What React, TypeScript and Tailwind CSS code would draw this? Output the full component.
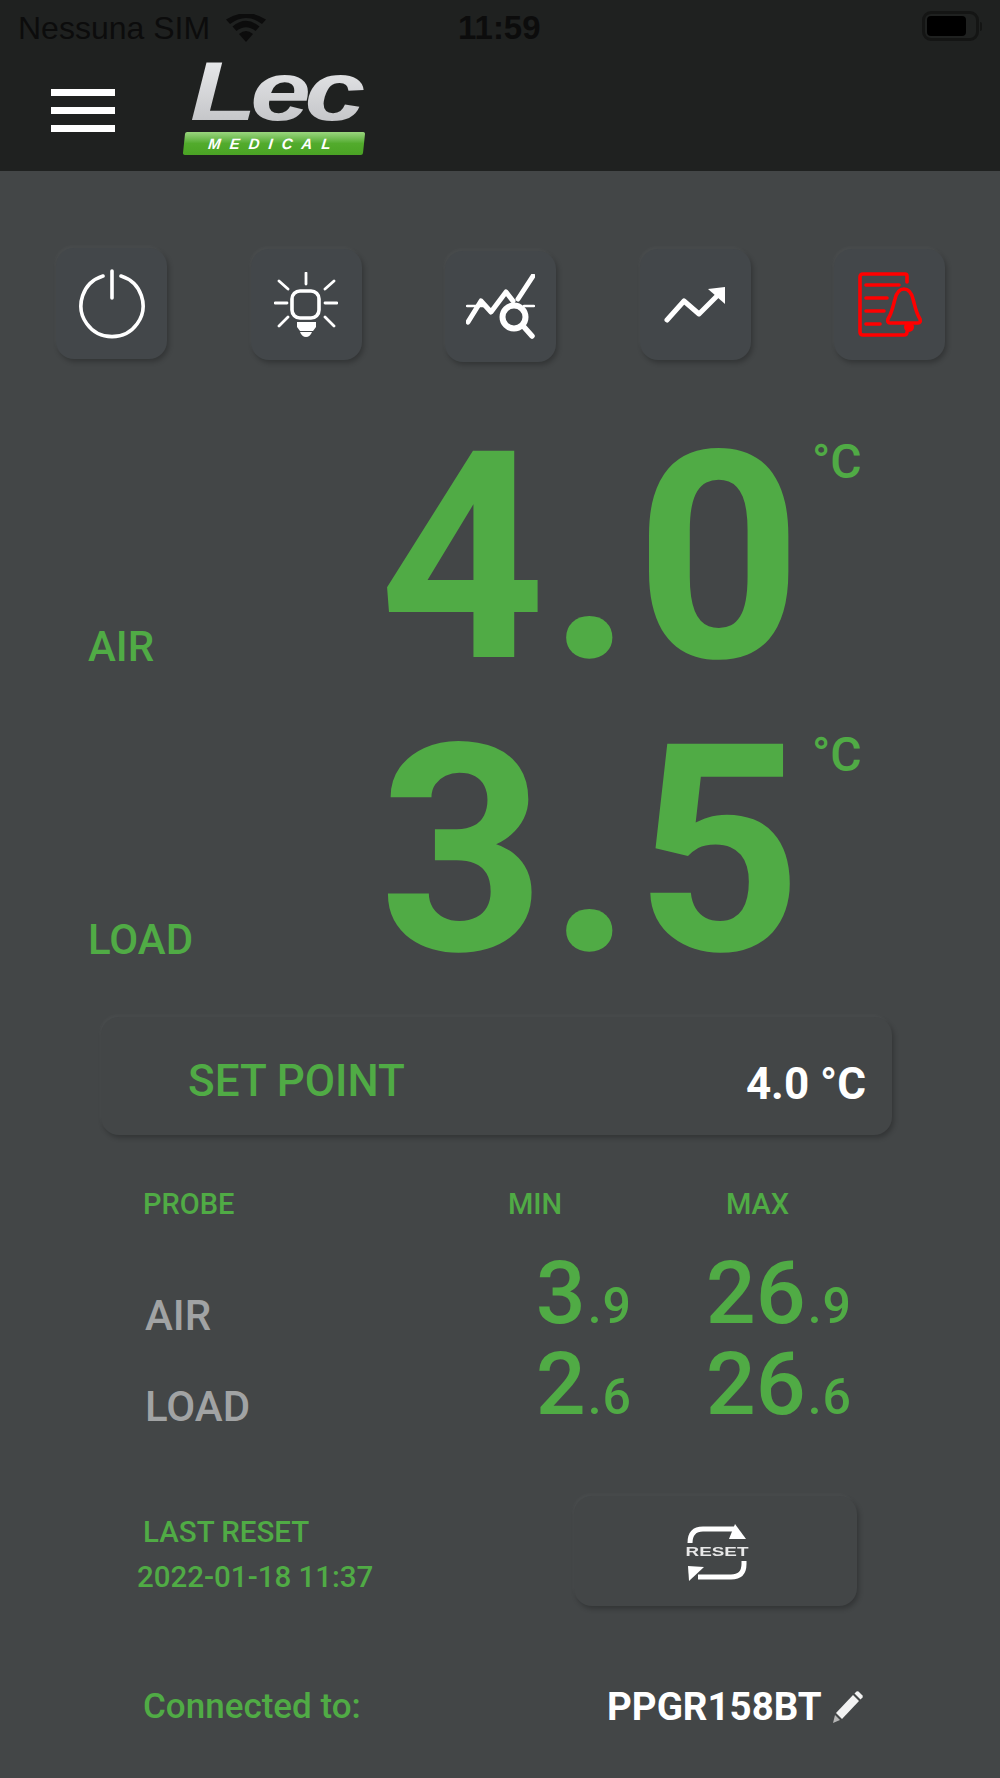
const GREEN = "text-[#50ab45]";
const cardShadow =
    "shadow-[2px_3px_5px_rgba(0,0,0,0.24),-1px_-2px_3px_rgba(255,255,255,0.04)]";

function PowerIcon() {
    return (
        <svg width="70" height="72" viewBox="0 0 70 72" fill="none" stroke="white" strokeWidth="3.6" strokeLinecap="round">
            <path d="M26 8 A31 31 0 1 0 44 8" />
            <path d="M35 3 V30" />
        </svg>
    );
}

function BulbIcon() {
    return (
        <svg width="64" height="66" viewBox="0 0 64 66" fill="none" stroke="white" strokeWidth="2.8" strokeLinecap="round">
            <rect x="18" y="19" width="27" height="27" rx="8" strokeWidth="3.6" />
            <path d="M32 1 V12 M1 31 H13 M51 31 H63 M5 9 L14 17 M60 9 L51 17 M5 54 L14 45 M60 54 L51 45" />
            <path d="M23 50 H42 V55 L39 59 H26 L23 55 Z" fill="white" stroke="none" />
            <path d="M26 60 H38 Q36 65 32 65 Q28 65 26 60 Z" fill="white" stroke="none" />
        </svg>
    );
}

function SearchChartIcon() {
    return (
        <svg width="69" height="66" viewBox="0 0 69 66" fill="none" stroke="white" strokeLinecap="round" strokeLinejoin="round">
            <path d="M2 48 L15 27 L25 38 L40 18 L47 27" strokeWidth="5" />
            <path d="M52 25 L67 2" strokeWidth="5" />
            <path d="M1 32 H18 M58 32 H68" strokeWidth="2.4" />
            <circle cx="48" cy="43" r="11.5" strokeWidth="6" />
            <path d="M58 53 L66 62" strokeWidth="5.5" />
        </svg>
    );
}

function TrendIcon() {
    return (
        <svg width="62" height="38" viewBox="0 0 62 38" fill="none">
            <path d="M3 34 L20 15 L35 28 L53 10" stroke="white" strokeWidth="5" strokeLinecap="round" strokeLinejoin="round" />
            <path d="M44 3 L61 1 V18 Z" fill="white" />
        </svg>
    );
}

function AlarmLogIcon() {
    return (
        <svg width="64" height="66" viewBox="0 0 64 66" fill="none" stroke="#ff0000" strokeLinecap="round" strokeLinejoin="round">
            <path d="M49 10 V4 Q49 2 47 2 H5 Q2 2 2 5 V60 Q2 63 5 63 H46 Q49 63 49 60" strokeWidth="3.6" />
            <path d="M8 13 H41 M8 26 H29 M8 39 H26 M8 52 H22" strokeWidth="3.6" />
            <path d="M32 51 H60 Q63 51 62 47 C58 41 57 34 55 27 C53 19 50 17 46 17 C42 17 39 19 37 27 C35 34 34 41 30 47 Q29 51 32 51 Z" strokeWidth="3.6" />
            <circle cx="51" cy="55" r="5" fill="#ff0000" stroke="none" />
        </svg>
    );
}

function LecLogo() {
    return (
        <div className="flex flex-col w-[182px]">
            <div className="h-[60px] pl-[6px] flex items-end">
                <span className="inline-block origin-left scale-x-[1.3] pr-[8px] text-[84px] leading-[64px] font-bold italic tracking-[-5px] text-transparent bg-clip-text bg-gradient-to-b from-[#e8e9eb] to-[#c4c5c8] font-['Liberation_Sans',sans-serif]">
                    Lec
                </span>
            </div>
            <div className="mt-[9px] h-[23px] w-[180px] -skew-x-6 rounded-[2px] bg-gradient-to-b from-[#9ad67e] via-[#52ab2c] to-[#4aa324] flex items-center justify-center">
                <span className="text-[15px] leading-none italic font-bold tracking-[9px] text-white font-['Liberation_Sans',sans-serif]">
                    MEDICAL
                </span>
            </div>
        </div>
    );
}

function IconButton({ children, className = "" }: { children: React.ReactNode; className?: string }) {
    return (
        <button className={`w-[111px] h-[111px] rounded-[18px] bg-[#43474a] flex items-center justify-center ${cardShadow} ${className}`}>
            {children}
        </button>
    );
}

function Reading({ label, value }: { label: string; value: string }) {
    return (
        <div className="flex h-[293px] items-start">
            <div className="w-[88px] shrink-0" />
            <div className={`w-[291px] shrink-0 self-end pb-[35px] text-[42px] leading-[47px] font-medium ${GREEN}`}>
                {label}
            </div>
            <div className={`w-[433px] shrink-0 text-[290px] leading-[293px] font-bold tracking-[3px] ${GREEN}`}>
                {value}
            </div>
            <div className={`pt-[24px] text-[48px] leading-[52px] font-medium ${GREEN}`}>°C</div>
        </div>
    );
}

function MinMax({ whole, dec, width }: { whole: string; dec: string; width: string }) {
    return (
        <div className={`${width} h-[91px] shrink-0 flex items-baseline justify-end ${GREEN} font-medium`}>
            <span className="mr-[2px] text-[88px] leading-[91px]">{whole}</span>
            <span className="text-[50px] leading-[50px] tracking-[1px]">.{dec}</span>
        </div>
    );
}

export default function App() {
    return (
        <div className="w-[1000px] h-[1778px] overflow-hidden bg-[#434647] font-['Roboto',sans-serif]">
            <header className="h-[171px] bg-[#1f2120]">
                <div className="h-[54px] relative flex items-center pl-[18px] pt-[1px] text-[#0c0c0c] font-['Liberation_Sans',sans-serif]">
                    <span className="text-[32px] leading-none">Nessuna SIM</span>
                    <svg className="ml-[16px]" width="40" height="28" viewBox="0 0 40 28" fill="#0c0c0c">
                        <path d="M20 28 L13 20 Q20 14 27 20 Z" />
                        <path d="M10.5 17 L6.5 12.5 Q20 1 33.5 12.5 L29.5 17 Q20 9.5 10.5 17 Z" />
                        <path d="M4 10 L0 5.5 Q20 -7 40 5.5 L36 10 Q20 -2 4 10 Z" />
                    </svg>
                    <span className="absolute left-[458px] top-[11px] text-[33px] leading-none font-bold">11:59</span>
                    <div className="absolute left-[922px] top-[11px] flex items-center">
                        <div className="w-[57px] h-[30px] rounded-[9px] border-[3px] border-[#141514] p-[2px]">
                            <div className="w-[39px] h-[20px] rounded-[4px] bg-black" />
                        </div>
                        <div className="ml-[1px] w-[2px] h-[9px] rounded-r bg-[#141514]" />
                    </div>
                </div>
                <div className="flex pl-[51px] pt-[9px]">
                    <div className="flex flex-col gap-[11px] pt-[26px] w-[64px]">
                        <div className="h-[7px] bg-white" />
                        <div className="h-[7px] bg-white" />
                        <div className="h-[7px] bg-white" />
                    </div>
                    <div className="ml-[69px]">
                        <LecLogo />
                    </div>
                </div>
            </header>

            <main className="pt-[77px]">
                <div className="flex items-start justify-between pl-[56px] pr-[55px]">
                    <IconButton><PowerIcon /></IconButton>
                    <IconButton className="mt-[1px]"><BulbIcon /></IconButton>
                    <IconButton className="mt-[3px]"><SearchChartIcon /></IconButton>
                    <IconButton className="mt-[1px]"><TrendIcon /></IconButton>
                    <IconButton className="mt-[1px]"><AlarmLogIcon /></IconButton>
                </div>

                <div className="mt-[50px]">
                    <Reading label="AIR" value="4.0" />
                    <Reading label="LOAD" value="3.5" />
                </div>

                <div className={`mt-[19px] ml-[101px] w-[791px] h-[118px] rounded-[18px] bg-[#434647] flex items-center justify-between pt-[9px] pl-[87px] pr-[26px] ${cardShadow}`}>
                    <span className={`text-[44px] leading-none font-medium ${GREEN}`}>SET POINT</span>
                    <span className="mt-[6px] text-[44px] leading-none font-bold text-white">4.0 °C</span>
                </div>

                <div className={`mt-[51px] flex pl-[143px] text-[29px] leading-[36px] font-medium ${GREEN}`}>
                    <span className="w-[365px]">PROBE</span>
                    <span className="w-[218px]">MIN</span>
                    <span>MAX</span>
                </div>

                <div className="mt-[25px] flex pl-[145px]">
                    <div className="w-[260px] shrink-0 pt-[23px] text-[42px] leading-[91px] font-medium text-[#a1a3a4]">
                        <div>AIR</div>
                        <div>LOAD</div>
                    </div>
                    <div className="flex flex-col">
                        <div className="flex">
                            <MinMax whole="3" dec="9" width="w-[227px]" />
                            <MinMax whole="26" dec="9" width="w-[220px]" />
                        </div>
                        <div className="flex">
                            <MinMax whole="2" dec="6" width="w-[227px]" />
                            <MinMax whole="26" dec="6" width="w-[220px]" />
                        </div>
                    </div>
                </div>

                <div className="mt-[44px] flex items-start">
                    <div className={`w-[574px] shrink-0 pt-[14px] pl-[137px] text-[29.5px] leading-[45px] font-medium ${GREEN}`}>
                        <div className="pl-[6px]">LAST RESET</div>
                        <div>2022-01-18 11:37</div>
                    </div>
                    <button className={`w-[283px] h-[110px] rounded-[18px] bg-[#434647] flex items-center justify-center ${cardShadow}`}>
                        <div className="relative ml-[3px] mt-[4px] w-[66px] h-[58px]">
                            <svg className="absolute inset-0" width="66" height="58" viewBox="0 0 66 58" fill="none">
                                <path d="M6 19 Q6 5 19 5 H52" stroke="white" strokeWidth="5" />
                                <path d="M51 0 L62 15 H45 Z" fill="white" />
                                <path d="M60 37 V40 Q60 53 47 53 H14" stroke="white" strokeWidth="5" />
                                <path d="M5 57 L4 42 L20 43 Z" fill="white" />
                            </svg>
                            <span className="absolute left-0 right-0 top-[21px] text-center text-[13px] leading-[14px] font-bold scale-x-[1.45] text-[#e8e8e8] font-['Liberation_Sans',sans-serif]">
                                RESET
                            </span>
                        </div>
                    </button>
                </div>

                <div className="mt-[79px] flex items-center pl-[143px]">
                    <span className={`w-[464px] shrink-0 text-[35px] leading-[44px] font-medium ${GREEN}`}>Connected to:</span>
                    <span className="text-[38.5px] leading-[44px] font-bold text-white">PPGR158BT</span>
                    <svg className="ml-[11px]" width="30" height="32" viewBox="0 0 30 32">
                        <path d="M3 22 L20 4 L26 10 L9 28 Z" fill="#f2f2f2" />
                        <path d="M21.5 2.5 L23.5 0.5 Q24.5 0 25.5 0.5 L29.5 4.5 Q30 5.5 29.5 6.5 L27.5 8.5 Z" fill="#f2f2f2" />
                        <path d="M2 24 L7 29 L0 32 Z" fill="#b5b5b5" />
                    </svg>
                </div>
            </main>
        </div>
    );
}
